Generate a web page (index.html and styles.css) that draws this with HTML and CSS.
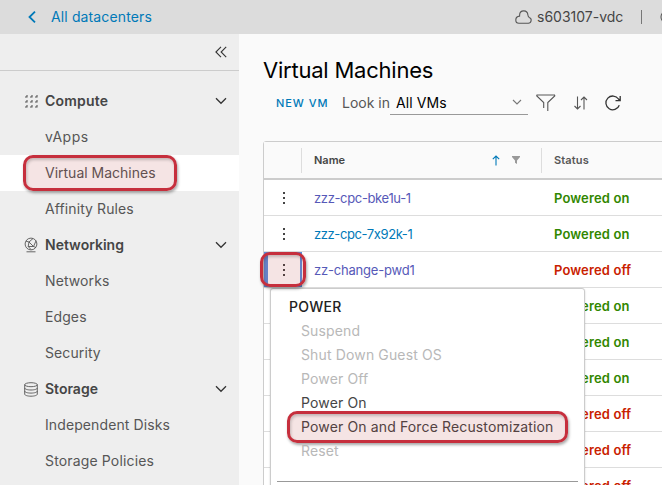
FILE: index.html
```html
<!DOCTYPE html>
<html lang="en">
<head>
<meta charset="utf-8">
<title>Virtual Machines</title>
<link rel="stylesheet" href="styles.css">
</head>
<body>
<div class="app">
  <header class="topbar">
    <svg class="back" width="10" height="14" viewBox="0 0 10 14"><path d="M8 1.600 2.500 7l5.500 5.400"/></svg>
    <a class="all-dc">All datacenters</a>
    <div class="context">
      <svg class="cloud" width="17" height="14" viewBox="0 0 17 14"><path d="M3.900 13.200h9.200a2.900 2.900 0 0 0 1.200-5.600C13.200 7 13 6.300 12.900 5 12.700 2.600 11 .9 8.800.9 6.400.9 4.600 2.700 4.600 5.200v.9C2.300 6.300.8 7.800.8 9.900c0 2 1.400 3.300 3.100 3.300Z"/></svg>
      <span class="vdc">s603107-vdc</span>
      <span class="bar"></span>
      <svg class="globe" width="14" height="14" viewBox="0 0 14 14"><circle cx="7" cy="7" r="6"/></svg>
    </div>
  </header>
  <div class="body">
    <nav class="sidebar">
      <div class="collapse"><svg width="12" height="12" viewBox="0 0 12 12"><path d="M6 .8.9 6 6 11.200M11.200.8 6.100 6l5.100 5.200"/></svg></div>
      <div class="group">
        <svg class="gicon dots" width="14" height="14" viewBox="0 0 14 14"><path d="M1 3h2V1M6 3h2V1M11 3h2V1M1 8h2V6M6 8h2V6M11 8h2V6M1 13h2v-2M6 13h2v-2M11 13h2v-2"/></svg>
        <span class="g1">Compute</span><svg class="chev" width="12" height="8" viewBox="0 0 12 8"><path d="m1 1.300 5 5 5-5"/></svg>
      </div>
      <a class="item i1">vApps</a>
      <a class="item i2 active"><span>Virtual Machines</span><i class="mark mark-nav"></i></a>
      <a class="item i3">Affinity Rules</a>
      <div class="group">
        <svg class="gicon" width="14" height="16" viewBox="0 0 14 16"><circle cx="7" cy="7" r="5.900"/><path d="M2 4.200 5 5l4.500 4.500 2.600-5.800M5 5l4-3.500M5 5l-.8 4.500L7 12.500M4.200 9.500l5.300 0 2.500 1M2.500 14.800h9"/></svg>
        <span class="g2">Networking</span><svg class="chev" width="12" height="8" viewBox="0 0 12 8"><path d="m1 1.300 5 5 5-5"/></svg>
      </div>
      <a class="item i4">Networks</a>
      <a class="item i5">Edges</a>
      <a class="item i6">Security</a>
      <div class="group">
        <svg class="gicon" width="14" height="15" viewBox="0 0 14 15"><ellipse cx="7" cy="2.700" rx="6.300" ry="2"/><path d="M.7 2.700v9.500c0 1.100 2.800 2 6.300 2s6.300-.9 6.300-2V2.700M.7 6c0 1.100 2.800 2 6.300 2s6.300-.9 6.300-2M.7 9.100c0 1.100 2.800 2 6.300 2s6.300-.9 6.300-2"/></svg>
        <span class="g3">Storage</span><svg class="chev" width="12" height="8" viewBox="0 0 12 8"><path d="m1 1.300 5 5 5-5"/></svg>
      </div>
      <a class="item i7">Independent Disks</a>
      <a class="item i8">Storage Policies</a>
    </nav>
    <main class="content">
      <h1>Virtual Machines</h1>
      <div class="toolbar">
        <a class="new-vm">NEW VM</a>
        <span class="look">Look in</span>
        <div class="select"><span>All VMs</span><svg width="10" height="7" viewBox="0 0 10 7"><path d="m1 1 4 4 4-4"/></svg></div>
        <svg class="filter" width="20" height="18" viewBox="0 0 20 18"><path d="M.5 1h18.500M.8 1v1l6.900 6.500v5.500M18.700 1v1l-6.900 6.500v8.500"/></svg>
        <svg class="sort" width="16" height="14" viewBox="0 0 16 14"><path d="M4.500.5v12.500M1.500 10l3 3 3-3M11 13.500V1M8 4l3-3 3 3"/></svg>
        <svg class="refresh" width="16" height="16" viewBox="0 0 16 16"><path d="M14.300 10.300A6.900 6.900 0 1 1 13.500 4L15 5.500M15.200 1v4.700h-4.700"/></svg>
      </div>
      <div class="table">
        <div class="thead">
          <div class="c-act"></div>
          <div class="c-name"><span>Name</span>
            <svg class="up" width="8" height="11" viewBox="0 0 8 11"><path d="M4 10.500V1M.8 4.200 4 1l3.200 3.200"/></svg>
            <svg class="mini" width="8" height="8" viewBox="0 0 8 8"><path d="M0 0h8v1L5 4.500V8L3 6.800V4.500L0 1Z"/></svg>
          </div>
          <div class="c-status">Status</div>
        </div>
        <div class="row"><div class="c-act"><b class="kebab"></b></div><a class="c-name visited n1">zzz-cpc-bke1u-1</a><div class="c-status on">Powered on</div></div>
        <div class="row"><div class="c-act"><b class="kebab"></b></div><a class="c-name n2">zzz-cpc-7x92k-1</a><div class="c-status on">Powered on</div></div>
        <div class="row">
          <div class="c-act focus"><b class="kebab"></b><i class="mark mark-act"></i>
            <div class="menu">
              <div class="mtitle">POWER</div>
              <div class="mi m1 off-item">Suspend</div>
              <div class="mi m2 off-item">Shut Down Guest OS</div>
              <div class="mi m3 off-item">Power Off</div>
              <div class="mi m4">Power On</div>
              <div class="mi m5"><span>Power On and Force Recustomization</span><i class="mark mark-menu"></i></div>
              <div class="mi m6 off-item">Reset</div>
              <div class="rule"></div>
            </div>
          </div>
          <a class="c-name visited n3">zz-change-pwd1</a><div class="c-status off">Powered off</div>
        </div>
        <div class="row"><div class="c-act"></div><div class="c-name"></div><div class="c-status on">Powered on</div></div>
        <div class="row"><div class="c-act"></div><div class="c-name"></div><div class="c-status on">Powered on</div></div>
        <div class="row"><div class="c-act"></div><div class="c-name"></div><div class="c-status on">Powered on</div></div>
        <div class="row"><div class="c-act"></div><div class="c-name"></div><div class="c-status off">Powered off</div></div>
        <div class="row"><div class="c-act"></div><div class="c-name"></div><div class="c-status off">Powered off</div></div>
        <div class="row"><div class="c-act"></div><div class="c-name"></div><div class="c-status off">Powered off</div></div>
      </div>
    </main>
  </div>
</div>
</body>
</html>
```
FILE: styles.css
```css
* { box-sizing: border-box; }
body { margin: 0; overflow: hidden; background: #fafafa; color: #565656; font: 14px/20px Inter, Lato, sans-serif; font-feature-settings: "calt" 0; }
svg { display: block; flex: none; fill: none; stroke: #565656; stroke-width: 1.1; overflow: visible; }
.app { width: 662px; height: 485px; overflow: hidden; display: flex; flex-direction: column; }
.topbar { height: 34px; flex: none; background: #dcdcdc; display: flex; align-items: center; white-space: nowrap; }
.back { margin-left: 27px; stroke: #0079b8; stroke-width: 1.8; }
.all-dc { margin-left: 14px; color: #0079b8; width: 464px; flex: none; letter-spacing: .13px; }
.context { display: flex; align-items: center; color: #454545; flex: none; }
.vdc { margin-left: 5px; width: 104px; flex: none; }
.bar { width: 1px; height: 14px; background: #777; flex: none; }
.globe { margin-left: 18px; }
.body { display: flex; flex: 1; min-height: 0; }
.sidebar { width: 239px; flex: none; background: #eee; display: flex; flex-direction: column; }
.collapse { height: 37px; flex: none; border-bottom: 1px solid #ccc; margin-bottom: 12px; display: flex; justify-content: flex-end; padding: 12px 12px 0 0; }
.collapse svg { stroke: #333; }
.group, .item { height: 36px; flex: none; display: flex; align-items: center; position: relative; white-space: nowrap; }
.group { font-weight: 600; padding: 0 12px 0 24px; color: #454545; }
.group span { margin-left: 7px; flex: 1; }
.g1 { letter-spacing: .2px; }
.gicon { stroke-width: .9; }
.dots { stroke-width: 1.1; }
.chev { stroke: #333; stroke-width: 1.3; }
.item { padding-left: 45px; letter-spacing: .1px; }
.i1 { letter-spacing: .5px; }
.i2 { letter-spacing: 0; }
.i8 { letter-spacing: .15px; }
.active { background: #fff; }
.mark { position: absolute; border: 3px solid #c62f3d; border-radius: 10px; background: rgba(175, 45, 45, .13); box-shadow: 1px 2px 3px rgba(0, 0, 0, .35), inset 1px 2px 3px rgba(0, 0, 0, .2); }
.mark-nav { left: 23px; top: 0; width: 154px; height: 36px; }
.content { flex: 1; min-width: 0; padding-left: 24px; display: flex; flex-direction: column; }
h1 { margin: 21px 0 0; font-weight: 400; font-size: 22px; line-height: 30px; color: #000; white-space: nowrap; letter-spacing: -.22px; }
.toolbar { height: 30px; margin-top: 6px; display: flex; align-items: center; padding-left: 13px; white-space: nowrap; }
.new-vm { width: 66px; font-size: 11px; font-weight: 500; letter-spacing: .95px; color: #0079b8; }
.look { width: 48px; }
.select { width: 138px; height: 24px; border-bottom: 1px solid #999; display: flex; align-items: center; justify-content: space-between; padding: 0 6px; color: #000; letter-spacing: .1px; }
.select svg { stroke: #777; }
.filter { margin-left: 8px; }
.sort { margin-left: 17px; }
.refresh { margin-left: 16px; stroke: #333; stroke-width: 1.3; }
.table { width: 440px; flex: none; margin-top: 26px; background: #fff; border: 1px solid #ccc; border-radius: 3px 0 0 0; }
.thead, .row { display: grid; grid-template-columns: 38px 240px 1fr; align-items: center; white-space: nowrap; }
.thead { height: 38px; border-bottom: 2px solid #ccc; background: #fafafa; font-size: 11px; font-weight: 600; }
.thead > div { height: 25px; display: flex; align-items: center; }
.thead .c-act, .thead .c-name { border-right: 1px solid #ddd; }
.thead .c-name span { flex: 1; }
.up { stroke: #0079b8; margin-right: 12px; }
.mini { fill: #999; stroke: none; margin-right: 21px; }
.row { height: 36px; border-bottom: 1px solid #ddd; font-size: 13px; }
.c-name { padding-left: 12px; color: #0079b8; }
.n1 { letter-spacing: -.35px; }
.n2 { letter-spacing: -.4px; }
.n3 { letter-spacing: -.2px; }
.thead .c-name { color: #454545; }
.c-status { padding-left: 12px; font-weight: 600; letter-spacing: .13px; }
.visited { color: #5659b8; }
.on { color: #318700; }
.off { color: #c92100; }
.c-act { height: 35px; display: flex; align-items: center; justify-content: center; position: relative; padding-left: 2px; }
.kebab { width: 2px; height: 2px; background: #454545; box-shadow: 0 -5px #454545, 0 5px #454545; }
.focus { border: 3px solid #5b8fdd; border-width: 1px 2px 3px 4px; padding: 2px 0 0; }
.mark-act { z-index: 3; left: -8px; top: -1px; width: 46px; height: 35px; }
.menu { position: absolute; z-index: 2; left: 2px; top: 35px; width: 315px; height: 220px; background: #fff; border: 1px solid #ccc; border-radius: 3px; box-shadow: 0 1px 2px rgba(0, 0, 0, .2); padding: 6px 6px 0; font-size: 14px; color: #454545; }
.mtitle { height: 24px; line-height: 24px; padding-left: 12px; font-size: 14px; font-weight: 500; letter-spacing: .3px; color: #222; }
.mi { height: 24px; line-height: 24px; padding-left: 24px; position: relative; letter-spacing: .14px; }
.off-item { color: #b8b8b8; }
.mark-menu { left: 10px; top: -4px; width: 281px; height: 32px; }
.rule { margin-top: 18px; height: 1px; background: #999; }
```
